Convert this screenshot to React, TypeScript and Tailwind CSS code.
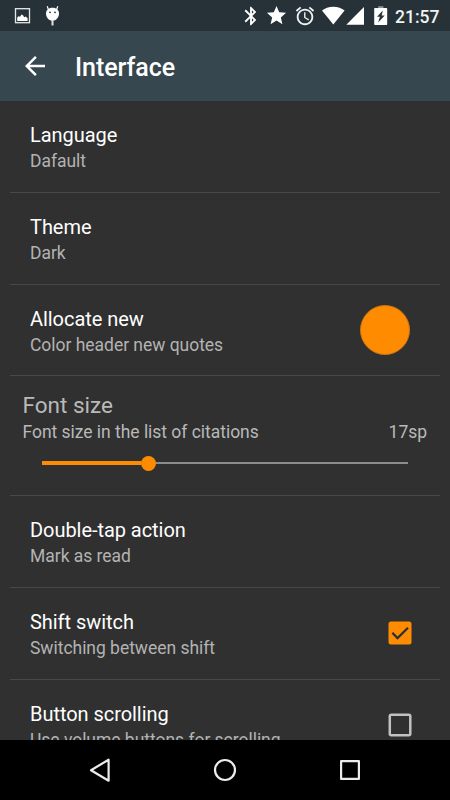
import React from "react";
import clsx from "clsx";

interface Preference {
  id: string;
  title: string;
  summary: string;
  widget?: React.ReactNode;
  compact?: boolean;
}

function PictureIcon() {
  return (
    <svg width="17" height="31" viewBox="0 0 17 31">
      <rect x="1.5" y="8.7" width="14" height="14" fill="none" stroke="#e4e7e8" strokeWidth="1.3" />
      <path d="M3.200 21v-3.400l1.200-1.400 1.600.6 1.600-2.200 1.400.6 1.200 2 1.600-.6 1.800 1.600V21z" fill="#fff" />
    </svg>
  );
}

function DroidIcon() {
  return (
    <svg width="15" height="31" viewBox="0 0 15 31">
      <path d="M2.200 6.200l1.200 3.300M12.800 6.200l-1.200 3.300" stroke="#fff" strokeWidth="1.200" fill="none" />
      <path d="M7.500 7.800c4.200 0 6.500 2.400 6.500 5.800 0 4-2.800 7.200-6.500 7.200S1 17.600 1 13.600c0-3.400 2.300-5.800 6.500-5.800z" fill="#fff" />
      <rect x="6.500" y="20" width="2" height="5.600" rx=".6" fill="#dfe3e4" />
      <circle cx="5" cy="12.300" r=".9" fill="#263238" />
      <circle cx="10" cy="12.300" r=".9" fill="#263238" />
    </svg>
  );
}

function BluetoothIcon() {
  return (
    <svg width="22" height="22" viewBox="0 0 24 24" fill="#fff">
      <path d="M17.710 7.710L12 2h-1v7.590L6.410 5 5 6.410 10.590 12 5 17.590 6.410 19 11 14.410V22h1l5.710-5.710-4.300-4.290 4.300-4.290zM13 5.830l1.880 1.880L13 9.590V5.830zm1.880 10.460L13 18.170v-3.760l1.880 1.880z" />
    </svg>
  );
}

function StarIcon() {
  return (
    <svg width="23" height="23" viewBox="0 0 24 24" fill="#fff">
      <path d="M12 17.270L18.180 21l-1.640-7.030L22 9.240l-7.190-.61L12 2 9.190 8.630 2 9.240l5.460 4.730L5.820 21z" />
    </svg>
  );
}

function AlarmIcon() {
  return (
    <svg width="22" height="22" viewBox="0 0 24 24" fill="#f1f3f3">
      <path d="M22 5.720l-4.600-3.860-1.290 1.530 4.600 3.860L22 5.720zM7.880 3.390L6.600 1.860 2 5.710l1.290 1.530 4.590-3.850zM12.500 8H11v6l4.750 2.850.75-1.230-4-2.370V8zM12 4c-4.970 0-9 4.030-9 9s4.020 9 9 9c4.970 0 9-4.030 9-9s-4.030-9-9-9zm0 16c-3.870 0-7-3.130-7-7s3.130-7 7-7 7 3.130 7 7-3.130 7-7 7z" />
    </svg>
  );
}

function WifiIcon() {
  return (
    <svg width="23" height="31" viewBox="0 0 23 31" fill="#fff">
      <path d="M11.300 24.600L0 10.400C3 8.100 6.800 6.700 11.300 6.700s8.300 1.400 11.300 3.700z" />
    </svg>
  );
}

function SignalIcon() {
  return (
    <svg width="18" height="31" viewBox="0 0 18 31" fill="#fff">
      <path d="M.3 24.700H18V7z" />
    </svg>
  );
}

function BatteryIcon() {
  return (
    <svg width="14" height="31" viewBox="0 0 14 31">
      <rect x="4.200" y="6.200" width="5.200" height="2.300" fill="#8c9498" />
      <rect x=".2" y="8" width="13" height="17" rx=".8" fill="#fff" />
      <path d="M8.800 10.600L3 16.800h2.900L4.200 22.600l6.500-7H7.700z" fill="#263238" />
    </svg>
  );
}

function BackIcon() {
  return (
    <svg width="30" height="30" viewBox="0 0 24 24" fill="#fff">
      <path d="M20 11H7.830l5.590-5.590L12 4l-8 8 8 8 1.410-1.410L7.830 13H20v-2z" />
    </svg>
  );
}

function Checkbox({ checked }: { checked: boolean }) {
  return (
    <svg width="30" height="30" viewBox="0 0 30 30" className="mr-[5px] mb-px">
      {checked ? (
        <>
          <rect x="3.500" y="3.500" width="23" height="23" rx="2.500" fill="#ff8b00" />
          <path d="M7.300 14.800l5.200 5.300L23 9.800" fill="none" stroke="#263238" strokeWidth="2.200" />
        </>
      ) : (
        <rect x="4.800" y="4.800" width="20.500" height="20.500" rx="1.500" fill="none" stroke="#c1c1c1" strokeWidth="2.500" />
      )}
    </svg>
  );
}

const topPreferences: Preference[] = [
  { id: "language", title: "Language", summary: "Dafault" },
  { id: "theme", title: "Theme", summary: "Dark" },
  {
    id: "allocate",
    title: "Allocate new",
    summary: "Color header new quotes",
    widget: <div className="mr-[10px] w-[50px] h-[50px] rounded-full bg-[#ff8b00] border border-[#c87414]" />,
    compact: true,
  },
];

const bottomPreferences: Preference[] = [
  { id: "double-tap", title: "Double-tap action", summary: "Mark as read" },
  { id: "shift", title: "Shift switch", summary: "Switching between shift", widget: <Checkbox checked /> },
  {
    id: "buttons",
    title: "Button scrolling",
    summary: "Use volume buttons for scrolling",
    widget: <Checkbox checked={false} />,
  },
];

function PreferenceRow({ item }: { item: Preference }) {
  return (
    <div
      className={clsx(
        "shrink-0 mx-[10px] px-5 flex items-center justify-between border-b border-[#484848]",
        item.compact ? "h-[91px]" : "h-[92px]"
      )}
    >
      <div className="pt-[2px] whitespace-nowrap">
        <div className="text-[20px] leading-[26px] tracking-[-0.05px] text-white">{item.title}</div>
        <div className="mt-px text-[17.5px] leading-[24px] tracking-[-0.03px] text-[#b3b3b3]">{item.summary}</div>
      </div>
      {item.widget}
    </div>
  );
}

function FontSizeRow() {
  return (
    <div className="shrink-0 h-[120px] mx-[10px] pl-[12.5px] pr-[13px] pt-[15px] border-b border-[#484848] text-[#b9b9b9]">
      <div className="text-[22.5px] leading-[28px]">Font size</div>
      <div className="flex justify-between mt-px text-[17.5px] leading-[24px] tracking-[-0.03px]">
        <span>Font size in the list of citations</span>
        <span>17sp</span>
      </div>
      <div className="flex items-center h-[16px] mt-[11px] ml-[19.5px] mr-[19px]">
        <div className="w-[99px] h-[4px] bg-[#ff8b00]" />
        <div className="w-[15px] h-[15px] rounded-full bg-[#ff8b00]" />
        <div className="flex-1 h-[2px] bg-[#8c8c8c]" />
      </div>
    </div>
  );
}

export default function App() {
  return (
    <div className="w-[450px] h-[800px] flex flex-col overflow-hidden bg-[#303030] font-['Roboto',sans-serif]">
      {/* Status bar */}
      <div className="h-[31px] shrink-0 bg-[#263238] flex items-center justify-between pl-[14px] pr-[10px]">
        <div className="flex items-center gap-[14px]">
          <PictureIcon />
          <DroidIcon />
        </div>
        <div className="flex items-center">
          <BluetoothIcon />
          <div className="ml-[3px]"><StarIcon /></div>
          <div className="ml-[6px]"><AlarmIcon /></div>
          <div className="ml-[6px]"><WifiIcon /></div>
          <div className="ml-[1px]"><SignalIcon /></div>
          <div className="ml-[10px]"><BatteryIcon /></div>
          <span className="ml-[7px] pt-[3px] w-[45px] text-[17.5px] leading-[28px] font-medium text-[#f1f3f3] whitespace-nowrap">21:57</span>
        </div>
      </div>

      {/* Toolbar */}
      <div className="h-[70px] shrink-0 bg-[#37474f] flex items-center pl-5">
        <BackIcon />
        <h1 className="ml-[25px] pt-[4px] text-[25px] leading-[30px] tracking-[-0.06px] font-medium text-white">Interface</h1>
      </div>

      {/* Preference list, last row runs under the navigation bar */}
      <div className="flex-1 min-h-0 overflow-hidden flex flex-col">
        {topPreferences.map((item) => (
          <PreferenceRow key={item.id} item={item} />
        ))}
        <FontSizeRow />
        {bottomPreferences.map((item) => (
          <PreferenceRow key={item.id} item={item} />
        ))}
      </div>

      {/* Navigation bar */}
      <div className="h-[60px] shrink-0 bg-black flex items-center justify-center gap-[95px]">
        <svg width="30" height="30" viewBox="0 0 30 30" fill="none" stroke="#ececec" strokeWidth="2.200" strokeLinejoin="round">
          <path d="M23.600 4.700v21L6 15.200z" />
        </svg>
        <svg width="30" height="30" viewBox="0 0 30 30" fill="none" stroke="#ececec" strokeWidth="2.200">
          <circle cx="15" cy="15" r="10" />
        </svg>
        <svg width="30" height="30" viewBox="0 0 30 30" fill="none" stroke="#ececec" strokeWidth="2.200" strokeLinejoin="round">
          <rect x="6.100" y="6.100" width="17.800" height="17.800" />
        </svg>
      </div>
    </div>
  );
}
